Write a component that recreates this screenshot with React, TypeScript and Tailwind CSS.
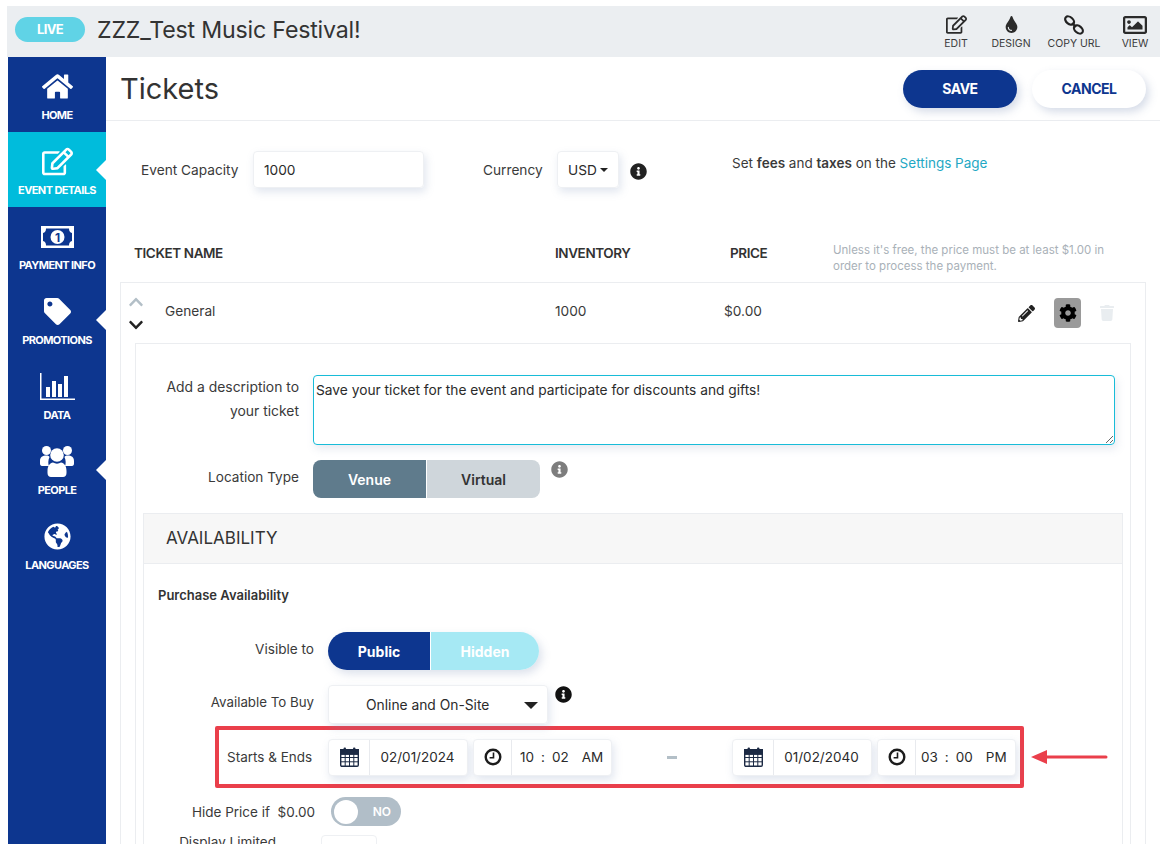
import { FaHome, FaRegEdit, FaTag, FaGlobeAmericas, FaTint, FaRegImage, FaPencilAlt, FaCog, FaTrash, FaInfoCircle, FaChevronUp, FaChevronDown } from 'react-icons/fa';
import type { ReactNode } from 'react';

function MoneyIcon() {
  return (
    <svg width="33" height="22" viewBox="0 0 33 22">
      <rect width="33" height="22" fill="#fff" />
      <path d="M5 2.5H28C28 5 29 6.5 31 7V15C29 15.5 28 17 28 19.5H5C5 17 4 15.5 2 15V7C4 6.5 5 5 5 2.5Z" fill="#0d368f" />
      <circle cx="16.5" cy="11" r="7" fill="#fff" />
      <text x="16.5" y="15.5" textAnchor="middle" fontSize="12" fontWeight="700" fill="#0d368f" fontFamily="Inter, sans-serif">1</text>
    </svg>
  );
}

function DataIcon() {
  return (
    <svg width="35" height="28" viewBox="0 0 35 28" fill="#fff">
      <path d="M0 0H1.5V25.5H35V27H0Z" />
      <rect x="6" y="14" width="4" height="10" />
      <rect x="12" y="8" width="4" height="16" />
      <rect x="18" y="11" width="4" height="13" />
      <rect x="24" y="3" width="4" height="21" />
    </svg>
  );
}

function PeopleIcon() {
  return (
    <svg width="34" height="31" viewBox="0 0 34 31" fill="#fff">
      <circle cx="6.5" cy="4.5" r="4.5" />
      <circle cx="27.5" cy="4.5" r="4.5" />
      <path d="M0 15C0 11 2.500 9.500 6.500 9.500 8 9.500 9 10 9.500 11 8 14 8 18 9 20H2C.7 20 0 19 0 17.500Z" />
      <path d="M34 15C34 11 31.500 9.500 27.500 9.500 26 9.500 25 10 24.500 11 26 14 26 18 25 20H32C33.300 20 34 19 34 17.500Z" />
      <circle cx="17" cy="9" r="6.800" />
      <path d="M7.500 25C7.500 19.500 10 17 13 16.500 15.500 18 18.500 18 21 16.500 24 17 26.500 19.500 26.500 25V27C26.500 29.500 25 31 23 31H11C9 31 7.500 29.500 7.500 27Z" />
    </svg>
  );
}

function ChainIcon() {
  return (
    <svg width="20" height="20" viewBox="0 0 20 20" fill="none" stroke="#222" strokeWidth="2.2">
      <ellipse cx="5.6" cy="5.6" rx="5" ry="3.4" transform="rotate(40 5.6 5.6)" />
      <ellipse cx="14.4" cy="14.4" rx="5" ry="3.4" transform="rotate(40 14.4 14.4)" />
      <path d="M8 8 12 12" />
    </svg>
  );
}

function CalendarIcon() {
  return (
    <svg width="19" height="20" viewBox="0 0 19 20" fill="none" stroke="#1c2a44">
      <rect x="0.7" y="2.7" width="17.6" height="16.6" rx="1.2" strokeWidth="1.4" />
      <rect x="0.7" y="2.7" width="17.6" height="4.5" fill="#1c2a44" strokeWidth="1.4" />
      <path d="M0.7 10.5H18.3M0.7 14.8H18.3M5.2 7V19M9.5 7V19M13.8 7V19" strokeWidth="1" />
      <rect x="3.6" y="0.5" width="2.4" height="4.5" rx="1" fill="#1c2a44" stroke="none" />
      <rect x="13" y="0.5" width="2.4" height="4.5" rx="1" fill="#1c2a44" stroke="none" />
    </svg>
  );
}

function Clock() {
  return (
    <svg width="18" height="18" viewBox="0 0 18 18" fill="none" stroke="#1c1c1c">
      <circle cx="9" cy="9" r="7.3" strokeWidth="2.4" />
      <path d="M9.5 4.5V9.8H5.6" strokeWidth="1.6" />
    </svg>
  );
}

const navItems = [
  { label: 'HOME', icon: <FaHome size={31} />, notch: false, active: false },
  { label: 'EVENT DETAILS', icon: <FaRegEdit size={31} />, notch: true, active: true },
  { label: 'PAYMENT INFO', icon: <MoneyIcon />, notch: false, active: false },
  { label: 'PROMOTIONS', icon: <FaTag size={27} />, notch: true, active: false },
  { label: 'DATA', icon: <DataIcon />, notch: false, active: false },
  { label: 'PEOPLE', icon: <PeopleIcon />, notch: true, active: false },
  { label: 'LANGUAGES', icon: <FaGlobeAmericas size={27} />, notch: false, active: false },
];

function TopAction({ icon, label, width }: { icon: ReactNode; label: string; width: string }) {
  return (
    <div className={`flex flex-col items-center text-[#2b2b2b] ${width}`}>
      <div className="h-[24px] flex items-center justify-center">{icon}</div>
      <div className="text-[10.5px] leading-[14px] text-[#3b3b3b] whitespace-nowrap">{label}</div>
    </div>
  );
}

function DateGroup({ date }: { date: string }) {
  return (
    <div className="flex h-[37px] w-[140px] bg-white rounded border border-[#eef0f3] shadow-[2px_4px_8px_rgba(120,140,180,0.22)]">
      <div className="w-[41px] shrink-0 flex items-center justify-center border-r border-[#e8eaee]">
        <CalendarIcon />
      </div>
      <div className="flex-1 flex items-center justify-center pr-[2px] text-[13.5px] text-[#2b2b2b]">{date}</div>
    </div>
  );
}

function TimeGroup({ hh, mm, ap, pad }: { hh: string; mm: string; ap: string; pad: string }) {
  return (
    <div className="flex h-[37px] w-[139px] bg-white rounded border border-[#eef0f3] shadow-[2px_4px_8px_rgba(120,140,180,0.22)]">
      <div className="w-[38px] shrink-0 flex items-center justify-center border-r border-[#e8eaee]">
        <Clock />
      </div>
      <div className={`flex-1 flex items-center text-[13.5px] text-[#2b2b2b] ${pad}`}>
        <span>{hh}</span>
        <span className="mx-[7px]">:</span>
        <span>{mm}</span>
        <span className="ml-[13px]">{ap}</span>
      </div>
    </div>
  );
}

export default function App() {
  return (
    <div className="h-[844px] w-[1172px] overflow-hidden bg-white pt-[6px] pl-[8px] pr-[12px] font-['Inter','Liberation_Sans',sans-serif] text-[#3a3a3a]">
      {/* top bar */}
      <div className="h-[51px] -ml-[1px] bg-[#ebeef1] flex items-center pl-[8px] pr-[5px]">
        <div className="w-[70px] h-[25px] -mt-[4px] rounded-full bg-[#60d3e6] text-white text-[13px] font-bold flex items-center justify-center tracking-[-0.6px]">LIVE</div>
        <div className="ml-[12px] -mt-[3px] text-[23.2px] text-[#333] tracking-[-0.2px]">ZZZ_Test Music Festival!</div>
        <div className="ml-auto flex items-start">
          <TopAction icon={<FaRegEdit size={21} />} label="EDIT" width="w-[66px]" />
          <TopAction icon={<FaTint size={17} />} label="DESIGN" width="w-[44px]" />
          <TopAction icon={<ChainIcon />} label="COPY URL" width="w-[82px]" />
          <TopAction icon={<FaRegImage size={24} />} label="VIEW" width="w-[40px]" />
        </div>
      </div>

      <div className="flex h-[787px]">
        {/* sidebar */}
        <div className="w-[98px] shrink-0 bg-[#0d368f] text-white">
          {navItems.map((item) => (
            <div key={item.label} className={`relative h-[75px] flex flex-col items-center ${item.active ? 'bg-[#00bcdc]' : ''}`}>
              <div className="h-[46px] flex items-center justify-center pt-[13px]">{item.icon}</div>
              <div className="text-[11px] font-bold tracking-[-0.6px] leading-[14px] mt-[5px] whitespace-nowrap">{item.label}</div>
              {item.notch && (
                <div className="absolute right-0 top-[28px] w-0 h-0 border-y-[10px] border-y-transparent border-r-[10px] border-r-white" />
              )}
            </div>
          ))}
        </div>

        {/* main */}
        <div className="flex-1 min-w-0">
          <div className="h-[64px] border-b border-[#ebedf0] flex items-center pl-[14px] pr-[14px]">
            <div className="text-[29px] text-[#333]">Tickets</div>
            <div className="ml-auto flex gap-[15px]">
              <button className="w-[114px] h-[38px] rounded-full bg-[#0d368f] text-white text-[14px] font-bold tracking-[-0.5px] shadow-[3px_4px_8px_rgba(120,140,180,0.3)]">SAVE</button>
              <button className="w-[114px] h-[38px] rounded-full bg-white text-[#0d368f] text-[14px] font-bold tracking-[-0.5px] shadow-[3px_4px_8px_rgba(120,140,180,0.3)]">CANCEL</button>
            </div>
          </div>

          {/* capacity row */}
          <div className="flex items-start h-[82px] pt-[30px] pl-[35px] text-[13.7px]">
            <div className="w-[112px] h-[37px] flex items-center pt-[1px]">Event Capacity</div>
            <div className="w-[171px] h-[37px] rounded border border-[#eef0f3] shadow-[2px_4px_8px_rgba(120,140,180,0.22)] flex items-center pl-[10px] pt-[1px] text-[#2b2b2b]">1000</div>
            <div className="ml-[59px] w-[74px] h-[37px] flex items-center pt-[1px]">Currency</div>
            <div className="w-[62px] h-[37px] rounded border border-[#eef0f3] shadow-[2px_4px_8px_rgba(120,140,180,0.22)] flex items-center justify-center pt-[1px] text-[#2b2b2b]">
              USD<span className="ml-[3px] w-0 h-0 border-x-[4px] border-x-transparent border-t-[4px] border-t-[#222]" />
            </div>
            <FaInfoCircle size={17} className="ml-[11px] mt-[12px] text-[#222]" />
            <div className="ml-[85px] h-[24px] flex items-center whitespace-nowrap text-[13.5px]">
              Set&nbsp;<b className="font-semibold">fees</b>&nbsp;and&nbsp;<b className="font-semibold">taxes</b>&nbsp;on the&nbsp;<span className="text-[#1fa8c4]">Settings Page</span>
            </div>
          </div>

          {/* table head */}
          <div className="flex h-[80px] pl-[28px] pt-[36px] text-[13.5px] font-semibold text-[#333]">
            <div className="w-[421px] pt-[4px] tracking-[-0.4px]">TICKET NAME</div>
            <div className="w-[175px] pt-[4px] tracking-[-0.4px]">INVENTORY</div>
            <div className="w-[103px] pt-[4px] tracking-[-0.4px]">PRICE</div>
            <div className="w-[285px] text-[11.5px] leading-[16px] font-normal text-[#a9b1b8] mt-[3px]">Unless it's free, the price must be at least $1.00 in order to process the payment.</div>
          </div>

          {/* ticket card */}
          <div className="ml-[14px] mr-[14px] border border-[#ebedf0] border-b-0 h-[600px] -mt-[1px]">
            <div className="h-[60px] flex items-center text-[13.7px] relative">
              <div className="w-[44px] pl-[7px] flex flex-col gap-[7px]">
                <FaChevronUp size={16} className="text-[#b3bfc7]" />
                <FaChevronDown size={16} className="text-[#222]" />
              </div>
              <div className="w-[390px] pb-[4px]">General</div>
              <div className="w-[169px] pb-[4px]">1000</div>
              <div className="pb-[4px]">$0.00</div>
              <div className="ml-auto flex items-center pr-[30px]">
                <FaPencilAlt size={17} className="text-[#222]" />
                <div className="ml-[19px] w-[27px] h-[30px] rounded bg-[#9a9a9a] flex items-center justify-center">
                  <FaCog size={18} className="text-black" />
                </div>
                <FaTrash size={16} className="ml-[18px] text-[#e9edf0]" />
              </div>
            </div>

            {/* expanded */}
            <div className="ml-[14px] mr-[14px] border border-[#ebedf0] border-b-0 h-[520px]">
              <div className="flex mt-[31px] pl-[8px]">
                <div className="w-[155px] text-right text-[13.9px] leading-[24px]">Add a description to your ticket</div>
                <div className="relative ml-[14px] w-[802px] h-[70px] rounded border border-[#18bcd8] shadow-[2px_4px_8px_rgba(120,140,180,0.18)] pl-[2px] pt-[4px] text-[13.75px] text-[#2b2b2b]">
                  Save your ticket for the event and participate for discounts and gifts!
                  <svg className="absolute right-[1px] bottom-[1px]" width="8" height="8" viewBox="0 0 8 8" stroke="#666" strokeWidth="1">
                    <path d="M1 8 8 1M5 8 8 5" />
                  </svg>
                </div>
              </div>

              <div className="flex mt-[15px]">
                <div className="w-[163px] text-right text-[13.6px] pt-[7px]">Location Type</div>
                <div className="ml-[14px] flex h-[38px] text-[14px] font-semibold">
                  <div className="w-[113px] rounded-l-lg bg-[#5f7b8c] text-white flex items-center justify-center">Venue</div>
                  <div className="w-[113px] ml-[1px] rounded-r-lg bg-[#cfd6db] text-[#333] flex items-center justify-center">Virtual</div>
                </div>
                <FaInfoCircle size={17} className="ml-[11px] mt-[1px] text-[#7d7d7d]" />
              </div>

              {/* availability */}
              <div className="mx-[7px] mt-[15px] border border-[#ebedf0] border-b-0 h-[400px]">
                <div className="h-[50px] bg-[#f7f7f7] border-b border-[#ebedf0] flex items-center pl-[22px] text-[17px] text-[#333]">AVAILABILITY</div>
                <div className="pl-[14px] pt-[22px] text-[13px] font-semibold text-[#333] h-[68px]">Purchase Availability</div>

                <div className="flex h-[38px]">
                  <div className="w-[170px] text-right text-[13.6px] pt-[7px]">Visible to</div>
                  <div className="ml-[14px] flex text-[14px] font-bold shadow-[3px_4px_8px_rgba(120,140,180,0.25)] rounded-full">
                    <div className="w-[102px] rounded-l-full bg-[#0d368f] text-white flex items-center justify-center">Public</div>
                    <div className="w-[108px] ml-[1px] rounded-r-full bg-[#a6e9f4] text-white flex items-center justify-center">Hidden</div>
                  </div>
                </div>

                <div className="flex mt-[15px] h-[39px]">
                  <div className="w-[170px] text-right text-[13.3px] pt-[8px]">Available To Buy</div>
                  <div className="ml-[14px] w-[220px] rounded border border-[#eef0f3] shadow-[2px_4px_8px_rgba(120,140,180,0.22)] flex items-center pl-[37px] pr-[9px] text-[13.8px] text-[#2b2b2b] pt-[2px]">
                    Online and On-Site
                    <span className="ml-auto w-0 h-0 border-x-[7px] border-x-transparent border-t-[7px] border-t-[#222]" />
                  </div>
                  <FaInfoCircle size={17} className="ml-[7px] mt-[1px] text-[#111]" />
                </div>

                {/* starts and ends, highlighted */}
                <div className="ml-[71px] mt-[2px] w-[809px] h-[62px] border-[4px] border-[#ea3f4b] rounded-[2px] flex items-center pl-[8px]">
                  <div className="w-[90px] text-[13.5px] text-[#3a3a3a] whitespace-nowrap">Starts &amp; Ends</div>
                  <div className="ml-[11px] flex gap-[5px]">
                    <DateGroup date="02/01/2024" />
                    <TimeGroup hh="10" mm="02" ap="AM" pad="pl-[8px]" />
                  </div>
                  <div className="w-[120px] flex justify-center">
                    <div className="w-[10px] h-[3px] bg-[#b3bfc7]" />
                  </div>
                  <div className="flex gap-[5px]">
                    <DateGroup date="01/02/2040" />
                    <TimeGroup hh="03" mm="00" ap="PM" pad="pl-[5px]" />
                  </div>
                </div>

                <div className="flex mt-[9px] h-[29px] items-center">
                  <div className="w-[171px] text-right text-[13.5px] pt-[2px]">Hide Price if &nbsp;$0.00</div>
                  <div className="ml-[16px] w-[70px] h-[29px] rounded-full bg-[#b1bec8] flex items-center pl-[3px] pr-[10px] justify-between text-[12px] font-semibold text-white">
                    <div className="w-[24px] h-[24px] rounded-full bg-white" />
                    NO
                  </div>
                </div>

                <div className="flex mt-[9px]">
                  <div className="w-[132px] text-right text-[13.5px] leading-[20px] whitespace-nowrap -mt-[3px]">Display Limited</div>
                  <div className="ml-[45px] w-[56px] h-[37px] rounded border border-[#eef0f3]" />
                </div>
              </div>
            </div>
          </div>
        </div>
      </div>

      {/* arrow beside the highlighted row */}
      <svg className="absolute left-[1031px] top-[748px]" width="78" height="18" viewBox="0 0 78 18" fill="#ea3f4b">
        <path d="M0 9 16 2V7.5H75a1.5 1.5 0 0 1 0 3H16V16Z" />
      </svg>
    </div>
  );
}
